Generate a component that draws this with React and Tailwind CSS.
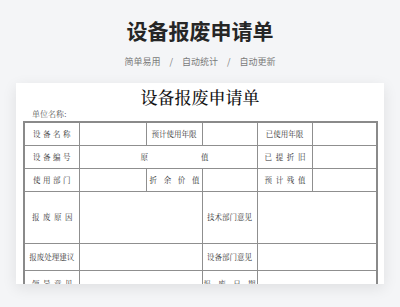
import React from "react";

const cell = "border border-[#8f8f8f] p-0 align-middle";
const serif = "font-['Noto_Serif_CJK_SC','Noto_Sans_CJK_SC',serif]";

// label spread evenly across the cell, like the printed form
const Spread = ({ text, pl = 8, pr = 8 }) => (
  <div className="flex justify-between" style={{ paddingLeft: pl, paddingRight: pr }}>
    {text.split("").map((c, i) => (
      <span key={i}>{c}</span>
    ))}
  </div>
);

const Label = ({ text }) => <div className="text-center">{text}</div>;

const App = () => {
  return (
    <div className="w-[400px] h-[307px] overflow-hidden bg-[#f4f5f7] font-['Noto_Sans_CJK_SC',sans-serif]">
      <h1 className="pt-[17px] text-center text-[21px] leading-[26px] font-bold text-[#262626]">
        设备报废申请单
      </h1>
      <div className="mt-[12px] flex justify-center items-center gap-[9px] text-[9px] leading-[14px] text-[#7a7a7a]">
        <span>简单易用</span>
        <span>/</span>
        <span>自动统计</span>
        <span>/</span>
        <span>自动更新</span>
      </div>

      <div className="mt-[14px] mx-4 h-[201px] overflow-hidden bg-white shadow-[0_4px_14px_rgba(0,0,0,0.09)]">
        <h2 className={`pt-[4px] text-center text-[17px] leading-[20px] font-medium text-[#111] ${serif}`}>
          设备报废申请单
        </h2>
        <div className={`mt-[2px] pl-[16px] text-[8px] leading-[10px] text-[#555] ${serif}`}>
          单位名称:
        </div>
        <div className={`mt-[2px] mx-[7px] ${serif}`}>
          <table className="w-[353px] table-fixed border-collapse border-2 border-[#8a8a8a] text-[7.5px] text-[#333]">
            <colgroup>
              <col className="w-[55px]" />
              <col className="w-[67px]" />
              <col className="w-[56px]" />
              <col className="w-[55px]" />
              <col className="w-[55px]" />
              <col className="w-[65px]" />
            </colgroup>
            <tbody>
              <tr className="h-[23px]">
                <td className={cell}><Spread text="设备名称" /></td>
                <td className={cell}></td>
                <td className={cell}><Label text="预计使用年限" /></td>
                <td className={cell}></td>
                <td className={cell}><Label text="已使用年限" /></td>
                <td className={cell}></td>
              </tr>
              <tr className="h-[23px]">
                <td className={cell}><Spread text="设备编号" /></td>
                <td className={cell} colSpan={3}><Spread text="原值" pl={61} pr={48} /></td>
                <td className={cell}><Spread text="已提折旧" pl={7} pr={6} /></td>
                <td className={cell}></td>
              </tr>
              <tr className="h-[23px]">
                <td className={cell}><Spread text="使用部门" /></td>
                <td className={cell}></td>
                <td className={cell}><Spread text="折余价值" pl={3} pr={2} /></td>
                <td className={cell}></td>
                <td className={cell}><Spread text="预计残值" pl={7} pr={6} /></td>
                <td className={cell}></td>
              </tr>
              <tr className="h-[52px]">
                <td className={cell}><Spread text="报废原因" pl={7} pr={6} /></td>
                <td className={cell} colSpan={2}></td>
                <td className={cell}><Label text="技术部门意见" /></td>
                <td className={cell} colSpan={2}></td>
              </tr>
              <tr className="h-[27px]">
                <td className={cell}><Label text="报废处理建议" /></td>
                <td className={cell} colSpan={2}></td>
                <td className={cell}><Label text="设备部门意见" /></td>
                <td className={cell} colSpan={2}></td>
              </tr>
              <tr className="h-[27px]">
                <td className={cell}><Spread text="领导意见" pl={7} pr={6} /></td>
                <td className={cell} colSpan={2}></td>
                <td className={cell}><Spread text="报废日期" pl={1} pr={1} /></td>
                <td className={cell} colSpan={2}></td>
              </tr>
            </tbody>
          </table>
        </div>
      </div>
    </div>
  );
};

export default App;
